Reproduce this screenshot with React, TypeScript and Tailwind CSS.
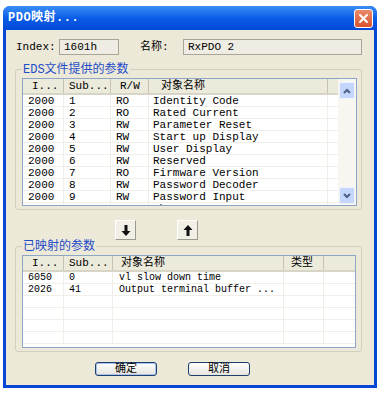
import React from "react";

const FONT = "font-['Liberation_Mono','Noto_Sans_CJK_SC',monospace]";

type Col = { w: string; label: string; hp: string; cp: string };

const edsCols: Col[] = [
  { w: "w-[41px]", label: "I...", hp: "pl-[9px]", cp: "pl-[5px]" },
  { w: "w-[47px]", label: "Sub...", hp: "pl-[5px]", cp: "pl-[5px]" },
  { w: "w-[38px]", label: "R/W", hp: "pl-[9px]", cp: "pl-[5px]" },
  { w: "w-[179px]", label: "对象名称", hp: "pl-[12px]", cp: "pl-[4px]" },
  { w: "flex-1", label: "", hp: "", cp: "" },
];

const edsRows = [
  ["2000", "1", "RO", "Identity Code"],
  ["2000", "2", "RO", "Rated Current"],
  ["2000", "3", "RW", "Parameter Reset"],
  ["2000", "4", "RW", "Start up Display"],
  ["2000", "5", "RW", "User Display"],
  ["2000", "6", "RW", "Reserved"],
  ["2000", "7", "RO", "Firmware Version"],
  ["2000", "8", "RW", "Password Decoder"],
  ["2000", "9", "RW", "Password Input"],
  ["2000", "10", "RW", "Change over PP"],
];

const mapCols: Col[] = [
  { w: "w-[41px]", label: "I...", hp: "pl-[9px]", cp: "pl-[5px]" },
  { w: "w-[49px]", label: "Sub...", hp: "pl-[5px]", cp: "pl-[5px]" },
  { w: "w-[171px]", label: "对象名称", hp: "pl-[8px]", cp: "pl-[6px]" },
  { w: "w-[40px]", label: "类型", hp: "pl-[7px]", cp: "pl-[4px]" },
  { w: "flex-1", label: "", hp: "", cp: "" },
];

const mapRows = [
  ["6050", "0", "vl slow down time", ""],
  ["2026", "41", "Output terminal buffer ...", ""],
  ["", "", "", ""],
  ["", "", "", ""],
  ["", "", "", ""],
  ["", "", "", ""],
];

function Header({ cols }: { cols: Col[] }) {
  return (
    <div className="flex h-[16px] shrink-0 bg-[#ebeadb] border-b-2 border-[#d8d4c6]">
      {cols.map((c, i) => (
        <div
          key={i}
          className={`${c.w} ${c.hp} shrink-0 h-full flex items-center text-[11px] leading-none text-black ${
            c.label || i < cols.length - 1 ? "border-r border-[#c7c3b4]" : ""
          }`}
        >
          {c.label}
        </div>
      ))}
    </div>
  );
}

function Rows({ cols, rows, size }: { cols: Col[]; rows: string[][]; size: string }) {
  return (
    <div className="flex-1 overflow-hidden bg-white">
      {rows.map((r, ri) => (
        <div key={ri} className="flex h-[12px] border-b border-[#efeee8]">
          {cols.map((c, i) => (
            <div
              key={i}
              className={`${c.w} ${c.cp} ${size} shrink-0 h-full leading-[12px] whitespace-nowrap overflow-hidden text-black ${
                i < cols.length - 1 ? "border-r border-[#efeee8]" : ""
              }`}
            >
              {r[i] ?? ""}
            </div>
          ))}
        </div>
      ))}
    </div>
  );
}

function ScrollBtn({ up }: { up?: boolean }) {
  return (
    <div className="h-[17px] rounded-[2px] bg-[#c5d6fc] border border-[#eef3fe] flex items-center justify-center">
      <svg width="8" height="6" viewBox="0 0 8 6">
        <path
          d={up ? "M1 5 L4 2 L7 5" : "M1 1 L4 4 L7 1"}
          fill="none"
          stroke="#4d6185"
          strokeWidth="2"
        />
      </svg>
    </div>
  );
}

function GroupBox({
  label,
  className,
  children,
}: {
  label: string;
  className: string;
  children: React.ReactNode;
}) {
  return (
    <div className={`relative border border-[#d0d0bf] rounded-[3px] ${className}`}>
      <span className="absolute left-[6px] top-[-8px] px-[1px] bg-[#ece9d8] text-[12px] leading-[16px] text-[#1f4bc8]">
        {label}
      </span>
      {children}
    </div>
  );
}

function ArrowBtn({ up }: { up?: boolean }) {
  return (
    <div className="w-[21px] h-[20px] bg-[#f1efe6] border border-t-white border-l-white border-r-[#9c9a8e] border-b-[#9c9a8e] flex items-center justify-center">
      <svg width="10" height="13" viewBox="0 0 10 13">
        {up ? (
          <path d="M5 1 L9.5 6 L6.5 6 L6.5 12 L3.5 12 L3.5 6 L0.5 6 Z" fill="#111" />
        ) : (
          <path d="M3.5 1 L6.5 1 L6.5 7 L9.5 7 L5 12 L0.5 7 L3.5 7 Z" fill="#111" />
        )}
      </svg>
    </div>
  );
}

function DlgButton({ label, focus }: { label: string; focus?: boolean }) {
  return (
    <div
      className={`w-[62px] h-[14px] rounded-[3px] border border-[#1c3f6e] bg-gradient-to-b from-white to-[#e6e4dc] flex items-center justify-center text-[11px] leading-none text-black ${
        focus ? "shadow-[inset_0_0_0_1px_#a8c1ee]" : ""
      }`}
    >
      {label}
    </div>
  );
}

export default function App() {
  return (
    <div className={`w-[380px] h-[393px] bg-white pt-[6px] pl-[3px] ${FONT}`}>
      <div className="w-[374px] h-[382px] flex flex-col rounded-t-[7px] bg-[#0a46d6] overflow-hidden">
        {/* Title bar */}
        <div className="h-[24px] shrink-0 flex items-center justify-between pl-[5px] pr-[4px] bg-gradient-to-b from-[#3b8ef7] via-[#0b5de6] to-[#0449d8]">
          <span className="text-white font-bold text-[12px] leading-none tracking-[0.5px]">
            PDO映射...
          </span>
          <div className="w-[19px] h-[19px] rounded-[3px] border border-white bg-gradient-to-b from-[#e98a6b] to-[#d9522c] flex items-center justify-center">
            <svg width="11" height="11" viewBox="0 0 11 11">
              <path d="M2 2 L9 9 M9 2 L2 9" stroke="white" strokeWidth="2" strokeLinecap="round" />
            </svg>
          </div>
        </div>

        {/* Body */}
        <div className="flex-1 mx-[3px] mb-[3px] bg-[#ece9d8] flex flex-col pt-[9px]">
          {/* Index row */}
          <div className="flex items-center h-[16px] pl-[10px] text-[11px] text-black">
            <span className="w-[43px]">Index:</span>
            <div className="w-[60px] h-[16px] border border-[#a8a497] bg-[#eeece3] pl-[4px] flex items-center leading-none">
              1601h
            </div>
            <span className="ml-[21px] w-[43px]">名称:</span>
            <div className="w-[179px] h-[16px] border border-[#a8a497] bg-[#eeece3] pl-[4px] flex items-center leading-none">
              RxPDO 2
            </div>
          </div>

          {/* EDS group */}
          <GroupBox label="EDS文件提供的参数" className="mt-[14px] ml-[9px] w-[347px] h-[141px] pt-[8px] pl-[6px]">
            <div className="w-[335px] h-[128px] border border-[#8ea6c6] flex bg-white">
              <div className="flex-1 flex flex-col overflow-hidden">
                <Header cols={edsCols} />
                <Rows cols={edsCols} rows={edsRows} size="text-[11px]" />
              </div>
              <div className="w-[18px] shrink-0 bg-[#f7f6f1] flex flex-col justify-between p-[1px] pt-[3px]">
                <ScrollBtn up />
                <ScrollBtn />
              </div>
            </div>
          </GroupBox>

          {/* Move buttons */}
          <div className="flex h-[20px] mt-[10px] pl-[109px] gap-[41px]">
            <ArrowBtn />
            <ArrowBtn up />
          </div>

          {/* Mapped group */}
          <GroupBox label="已映射的参数" className="mt-[6px] ml-[9px] w-[347px] h-[106px] pt-[8px] pl-[6px]">
            <div className="w-[334px] h-[93px] border border-[#8ea6c6] flex flex-col bg-white overflow-hidden">
              <Header cols={mapCols} />
              <Rows cols={mapCols} rows={mapRows} size="text-[10px]" />
            </div>
          </GroupBox>

          {/* Dialog buttons */}
          <div className="flex mt-[10px] pl-[89px] gap-[31px]">
            <DlgButton label="确定" focus />
            <DlgButton label="取消" />
          </div>
        </div>
      </div>
    </div>
  );
}
